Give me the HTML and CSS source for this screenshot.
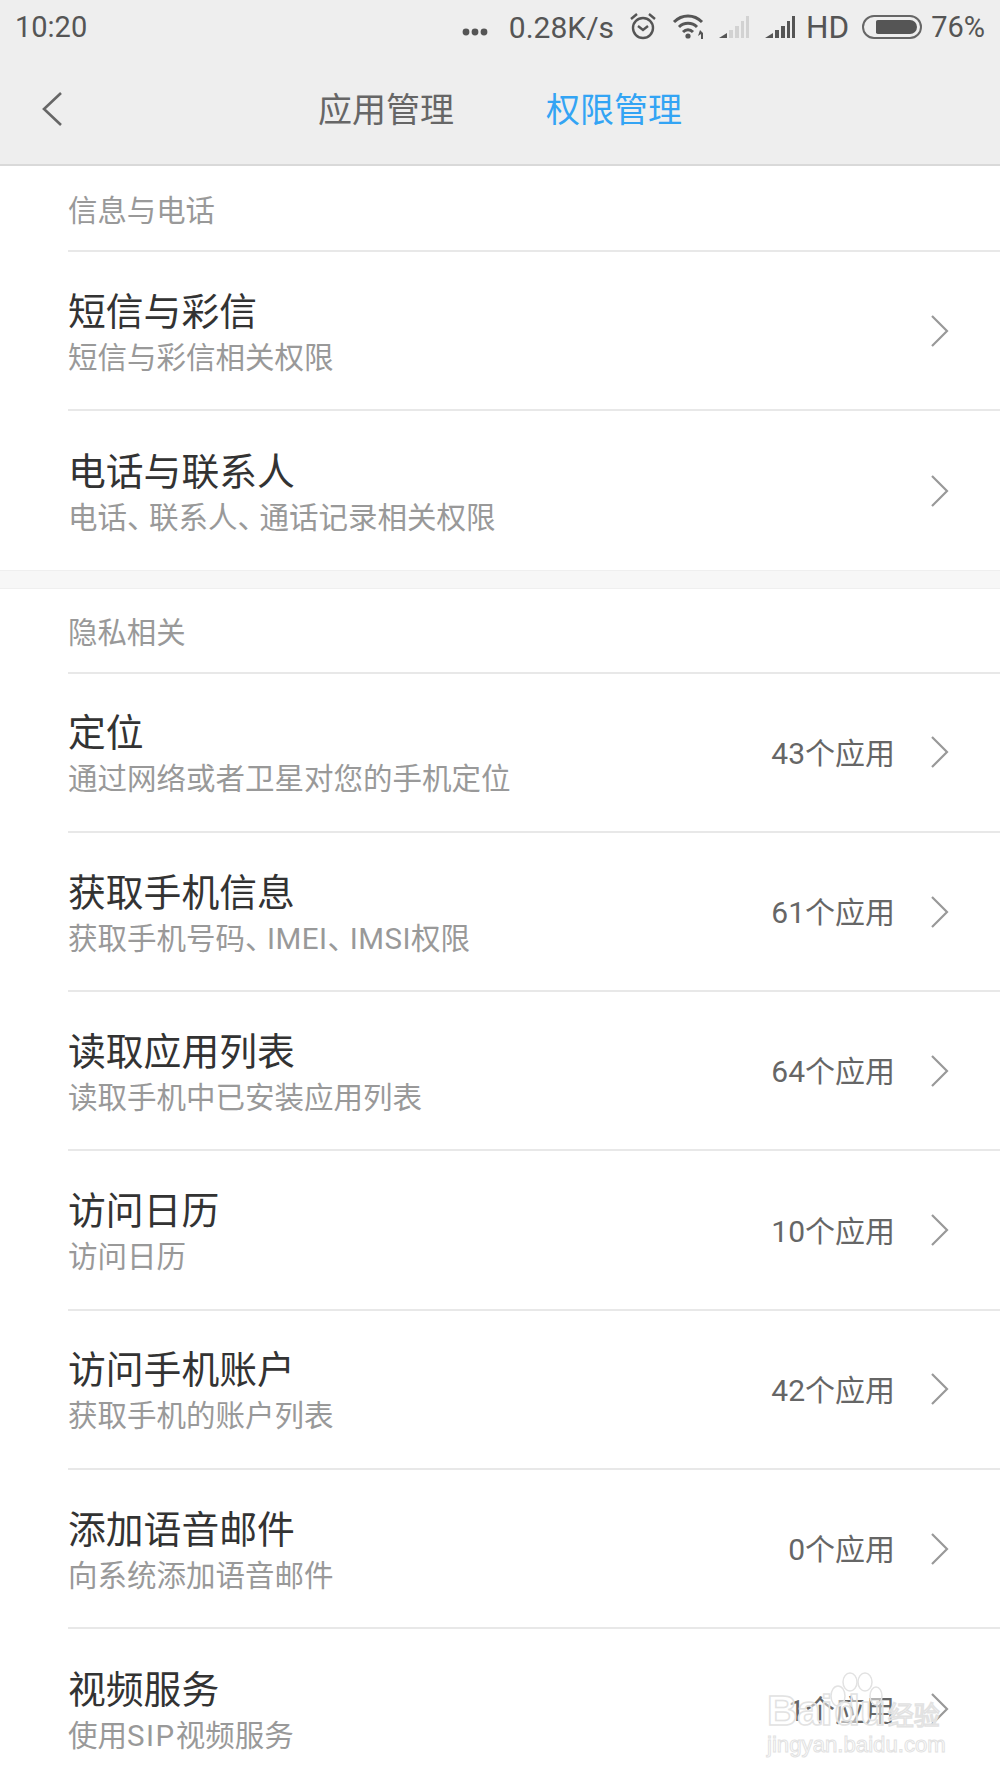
FILE: index.html
```html
<!DOCTYPE html>
<html lang="zh-CN">
<head>
    <meta charset="UTF-8">
    <meta name="viewport" content="width=device-width, initial-scale=1.0">
    <title>权限管理</title>
    <link rel="stylesheet" href="styles.css">
</head>
<body>
<div class="page">
    <div class="top">
        <div class="status">
            <span class="time">10:20</span>
            <div class="status-right">
                <svg class="dots" width="26" height="8" viewBox="0 0 26 8"><circle cx="4" cy="4" r="3.4"/><circle cx="13" cy="4" r="3.4"/><circle cx="22" cy="4" r="3.4"/></svg>
                <span class="speed">0.28K/s</span>
                <svg class="alarm" width="28" height="28" viewBox="0 0 28 28"><circle cx="14" cy="16" r="10"/><path d="M9 14l5 4 5-4M2 7l6-5M26 7l-6-5"/></svg>
                <svg class="wifi" width="35" height="26" viewBox="0 0 33 26"><path d="M2 9c8-8 20-8 28 0M7 14c5-5 13-5 18 0M11 19c3-3 7-3 10 0"/><circle class="solid" cx="16" cy="23" r="2.6"/><path class="solid" d="M28 17l3 3v6h-2v-5l-3 2z"/></svg>
                <svg class="sim sim-off" width="32" height="24" viewBox="0 0 30 24"><path class="on" d="M0 23l8-5v5z"/><path d="M10 15h4v8h-4zM16 11h4v12h-4zM22 6h3v17h-3zM27 1h3v22h-3z"/></svg>
                <svg class="sim" width="32" height="24" viewBox="0 0 30 24"><path d="M0 23l8-5v5zM10 15h4v8h-4zM16 11h4v12h-4zM22 6h3v17h-3zM27 1h3v22h-3z"/></svg>
                <span class="hd">HD</span>
                <div class="battery"><div class="battery-fill"></div></div>
                <span class="level">76%</span>
            </div>
        </div>
        <div class="nav">
            <svg class="back" width="22" height="36" viewBox="0 0 22 36"><path d="M20 2L3 18l17 16"/></svg>
            <div class="tabs">
                <span class="tab">应用管理</span>
                <span class="tab active">权限管理</span>
            </div>
        </div>
    </div>

    <div class="section">
        <div class="heading first">信息与电话</div>
        <div class="row">
            <div class="row-text"><div class="name">短信与彩信</div><div class="desc">短信与彩信相关权限</div></div>
            <svg class="arrow" width="20" height="32" viewBox="0 0 20 32"><path d="M2 1l15 15L2 31"/></svg>
        </div>
        <div class="row">
            <div class="row-text"><div class="name">电话与联系人</div><div class="desc">电话<span class="pause">、</span>联系人<span class="pause">、</span>通话记录相关权限</div></div>
            <svg class="arrow" width="20" height="32" viewBox="0 0 20 32"><path d="M2 1l15 15L2 31"/></svg>
        </div>
    </div>

    <div class="band"></div>

    <div class="section">
        <div class="heading">隐私相关</div>
        <div class="row">
            <div class="row-text"><div class="name">定位</div><div class="desc">通过网络或者卫星对您的手机定位</div></div>
            <span class="count">43个应用</span>
            <svg class="arrow" width="20" height="32" viewBox="0 0 20 32"><path d="M2 1l15 15L2 31"/></svg>
        </div>
        <div class="row">
            <div class="row-text"><div class="name">获取手机信息</div><div class="desc">获取手机号码<span class="pause">、</span><span class="latin">IMEI</span><span class="pause">、</span><span class="latin">IMSI</span>权限</div></div>
            <span class="count">61个应用</span>
            <svg class="arrow" width="20" height="32" viewBox="0 0 20 32"><path d="M2 1l15 15L2 31"/></svg>
        </div>
        <div class="row">
            <div class="row-text"><div class="name">读取应用列表</div><div class="desc">读取手机中已安装应用列表</div></div>
            <span class="count">64个应用</span>
            <svg class="arrow" width="20" height="32" viewBox="0 0 20 32"><path d="M2 1l15 15L2 31"/></svg>
        </div>
        <div class="row">
            <div class="row-text"><div class="name">访问日历</div><div class="desc">访问日历</div></div>
            <span class="count">10个应用</span>
            <svg class="arrow" width="20" height="32" viewBox="0 0 20 32"><path d="M2 1l15 15L2 31"/></svg>
        </div>
        <div class="row">
            <div class="row-text"><div class="name">访问手机账户</div><div class="desc">获取手机的账户列表</div></div>
            <span class="count">42个应用</span>
            <svg class="arrow" width="20" height="32" viewBox="0 0 20 32"><path d="M2 1l15 15L2 31"/></svg>
        </div>
        <div class="row">
            <div class="row-text"><div class="name">添加语音邮件</div><div class="desc">向系统添加语音邮件</div></div>
            <span class="count">0个应用</span>
            <svg class="arrow" width="20" height="32" viewBox="0 0 20 32"><path d="M2 1l15 15L2 31"/></svg>
        </div>
        <div class="row">
            <div class="row-text"><div class="name">视频服务</div><div class="desc">使用<span class="latin sip">SIP</span>视频服务</div></div>
            <span class="count">1个应用</span>
            <svg class="arrow" width="20" height="32" viewBox="0 0 20 32"><path d="M2 1l15 15L2 31"/></svg>
        </div>
    </div>

    <div class="watermark">
        <svg class="paw" width="54" height="50" viewBox="0 0 54 50"><ellipse cx="9" cy="24" rx="7" ry="10"/><ellipse cx="21" cy="10" rx="7" ry="9"/><ellipse cx="36" cy="10" rx="7" ry="9"/><ellipse cx="47" cy="24" rx="6" ry="9"/></svg>
        <div class="wm-logo"><span>Bai</span><span class="wm-du">du</span><span class="wm-cn">经验</span></div>
        <div class="wm-url">jingyan.baidu.com</div>
    </div>
</div>
</body>
</html>
```

FILE: styles.css
```css
* {
    box-sizing: border-box;
}
body {
    margin: 0;
    background-color: #fff;
    font-family: Roboto, "Noto Sans CJK SC", sans-serif;
    overflow: hidden;
}
.page {
    position: relative;
    width: 1000px;
    height: 1778px;
    overflow: hidden;
}
.top {
    height: 166px;
    background-color: #eeeeee;
    border-bottom: 2px solid #d9d9d9;
}
.status {
    display: flex;
    justify-content: space-between;
    align-items: center;
    height: 54px;
    padding: 0 15px;
    color: #555;
    font-size: 29px;
}
.status-right {
    display: flex;
    align-items: center;
}
.dots {
    fill: #555;
    margin: 10px 21px 0 0;
}
.speed {
    font-size: 30px;
    margin-right: 15px;
}
.alarm {
    fill: none;
    stroke: #555;
    stroke-width: 2.4;
    margin: -2px 14px 0 0;
}
.wifi {
    fill: none;
    stroke: #555;
    stroke-width: 3;
    margin: -2px 12px 0 0;
}
.wifi .solid {
    fill: #555;
    stroke: none;
}
.sim {
    fill: #555;
    margin-right: 10px;
}
.sim-off {
    fill: #d2d2d2;
    margin-right: 14px;
}
.sim-off .on {
    fill: #555;
}
.hd {
    font-size: 31.5px;
    margin-right: 13px;
}
.battery {
    width: 60px;
    height: 24px;
    padding: 3px;
    border: 2px solid #666;
    border-radius: 12px;
    display: flex;
    justify-content: flex-end;
    margin-right: 9px;
}
.battery-fill {
    width: 41px;
    background-color: #555;
    border-radius: 2px 8px 8px 2px;
}
.nav {
    position: relative;
    height: 110px;
    display: flex;
    align-items: center;
}
.back {
    fill: none;
    stroke: #666;
    stroke-width: 2.6;
    margin-left: 41px;
}
.tabs {
    display: flex;
    gap: 92px;
    margin: -4px 0 0 255px;
    font-size: 34px;
    color: #666;
}
.active {
    color: #33a4f4;
}
.section {
    padding-left: 68px;
}
.heading {
    height: 85px;
    display: flex;
    align-items: center;
    font-size: 29.4px;
    color: #999;
    padding-bottom: 1px;
    border-bottom: 2px solid #e8e8e8;
}
.first {
    height: 86px;
}
.row {
    display: flex;
    align-items: center;
    height: 159.3px;
    padding-right: 50px;
    border-bottom: 2px solid #e8e8e8;
}
.row:last-child {
    border-bottom: none;
}
.row-text {
    flex: 1;
    margin-top: 8px;
}
.name {
    font-size: 37.8px;
    line-height: 46px;
    color: #333;
}
.desc {
    font-size: 29.5px;
    line-height: 46px;
    color: #999;
}
.pause {
    letter-spacing: -7.5px;
}
.latin {
    letter-spacing: 0.5px;
}
.sip {
    letter-spacing: 1.5px;
}
.count {
    font-size: 30px;
    color: #666;
    margin: -3px 35px 0 0;
}
.arrow {
    fill: none;
    stroke: #999;
    stroke-width: 2.2;
}
.band {
    height: 19px;
    background-color: #f7f7f7;
    border-top: 1px solid #efefef;
    border-bottom: 1px solid #efefef;
    margin-top: -1px;
}
.watermark {
    position: absolute;
    left: 767px;
    top: 1672px;
    width: 180px;
    height: 90px;
    color: #fff;
}
.paw {
    position: absolute;
    left: 62px;
    top: 0;
    fill: rgba(255, 255, 255, 0.5);
    stroke: #e2e2e2;
    stroke-width: 1.5;
}
.wm-logo {
    position: absolute;
    left: 0;
    top: 14px;
    font-family: "Liberation Sans", "Noto Sans CJK SC", sans-serif;
    font-size: 42px;
    font-weight: bold;
    line-height: 50px;
    white-space: nowrap;
    color: rgba(255, 255, 255, 0.5);
    -webkit-text-stroke: 1.5px #e2e2e2;
}
.wm-du {
    margin-left: 2px;
}
.wm-cn {
    font-size: 26px;
    font-weight: normal;
    margin-left: 2px;
}
.wm-url {
    position: absolute;
    left: 0;
    top: 60px;
    font-family: "Liberation Sans", sans-serif;
    font-size: 22.2px;
    line-height: 26px;
    white-space: nowrap;
    color: rgba(255, 255, 255, 0.5);
    -webkit-text-stroke: 1px #e2e2e2;
}
```
